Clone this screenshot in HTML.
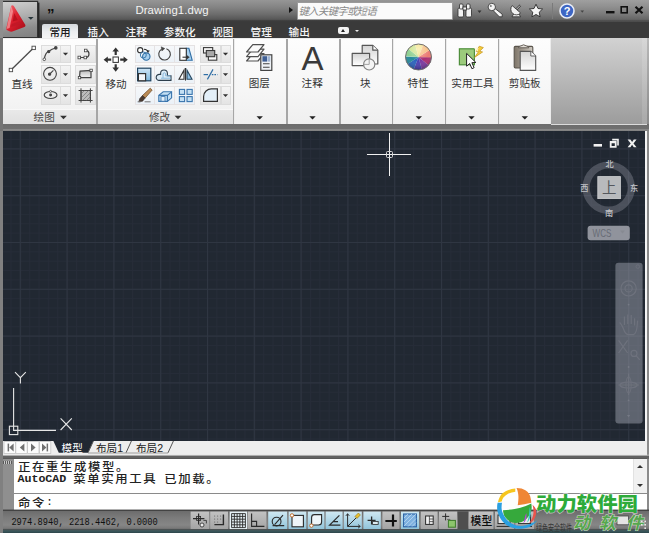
<!DOCTYPE html>
<html lang="zh-CN">
<head>
<meta charset="utf-8">
<title>Drawing1.dwg</title>
<style>
html,body{margin:0;padding:0;background:#3b3b3b;}
body{width:649px;height:533px;overflow:hidden;position:relative;font-family:"Liberation Sans","Noto Sans CJK SC",sans-serif;font-size:11px;color:#333;}
#app{position:absolute;left:0;top:0;width:649px;height:533px;overflow:hidden;background:#3b3b3b;}
.abs{position:absolute;}
/* title bar */
#title{left:0;top:0;width:649px;height:22px;background:linear-gradient(90deg,rgba(255,255,255,0) 0,rgba(255,255,255,0) 420px,rgba(255,255,255,0.09) 540px,rgba(255,255,255,0.09) 100%),linear-gradient(#969696 0,#828282 35%,#6c6c6c 65%,#575757 88%,#3d3d3d 94%,#3a3a3a 100%);}
#title .name{left:135.4px;top:1.8px;color:#f4f4f4;font-size:11.4px;letter-spacing:0.1px;line-height:16px;white-space:nowrap;}
#appbtn{left:3px;top:1.5px;width:34px;height:35px;background:linear-gradient(170deg,#d0d0d0,#b0b0b0 40%,#8c8c8c 75%,#808080);box-shadow:0 0 0 1.2px #333,1.4px 1.6px 0 1px #262626;}
#search{left:297px;top:2px;width:156px;height:17.6px;background:#fafafa;border:1px solid #9a9a9a;box-sizing:border-box;border-radius:1px;}
#search span{position:absolute;left:0.4px;top:1.2px;font-size:10.5px;line-height:14px;color:#8a8a8a;font-style:italic;white-space:nowrap;letter-spacing:-0.8px;}
/* tab bar */
#tabs{left:0;top:22px;width:649px;height:17px;background:#3a3a3a;}
.tab{position:absolute;top:3px;height:15px;line-height:15px;font-size:10.6px;font-weight:500;color:#f6f6f6;white-space:nowrap;}
#tab0{left:42px;top:24px;width:36px;height:15px;background:linear-gradient(#d4d8dc,#eceef0 50%,#f6f6f6);color:#1c1c1c;text-align:center;line-height:17px;font-size:10.6px;font-weight:500;border-radius:2px 2px 0 0;}
/* ribbon */
#ribbon{left:0;top:38px;width:649px;height:86.4px;background:#ececec;}
#ribright{left:551px;top:38px;width:98px;height:86px;background:linear-gradient(90deg,rgba(0,0,0,0) 0,rgba(0,0,0,0) 91px,rgba(255,255,255,0.12) 91px,rgba(255,255,255,0.12) 96px,rgba(0,0,0,0.12) 96px),linear-gradient(#d2d2d2,#9c9c9c);}
.panel{position:absolute;top:39px;height:85.6px;background:linear-gradient(#fdfdfd,#f6f6f6 60%,#efefef);}
.ptitle{position:absolute;left:0;right:0;bottom:0;height:16px;background:linear-gradient(#e9e9e9,#dfdfdf);border-top:1px solid #f8f8f8;box-sizing:border-box;font-size:10.6px;line-height:15px;color:#444;}
.lbl{position:absolute;font-size:10.6px;line-height:12px;color:#333;white-space:nowrap;text-align:center;}
.sb{position:absolute;width:21px;height:20px;background:linear-gradient(#f4f4f4,#e4e4e4);border:1px solid #dcdcdc;box-sizing:border-box;}
.sbb{position:absolute;width:21px;height:20px;background:linear-gradient(#f6f8fa,#ebf1f7);border:1px solid #e5e2e3;box-sizing:border-box;}
.dd{position:absolute;width:10px;height:20px;background:linear-gradient(#f4f4f4,#e4e4e4);border:1px solid #dcdcdc;border-left:none;box-sizing:border-box;}
.dd:after,.arr:after{content:"";position:absolute;left:2px;top:8px;border:3px solid transparent;border-top:3px solid #333;border-bottom:none;}
.arr{position:absolute;width:8px;height:6px;}
.arr:after{left:0;top:0;border-width:4px 4px 0 4px;border-top-color:#2a2a2a;}
/* canvas */
#belowrib{left:0;top:124px;width:649px;height:7px;background:linear-gradient(#6c6c6c 0,#707070 4.6px,#8a8a8a 5px,#808080 100%);}
#canvas{left:3px;top:131px;width:643px;height:309px;background:#222935;overflow:hidden;}
/* bottom */
#ltabs{left:0;top:440px;width:649px;height:15px;background:#f0f0f0;}
#cmd{left:0;top:455px;width:649px;height:54px;background:#fff;}
#status{left:0;top:509px;width:649px;height:24px;background:linear-gradient(#4a4a4a,#6d6d6d 20%,#5c5c5c 60%,#474747);}
.cj{display:inline-block;font-size:12.4px;letter-spacing:1.6px;position:relative;top:1.4px;transform:scaleY(0.9);transform-origin:50% 55%;font-weight:500 !important;font-family:"Noto Sans CJK SC","Noto Sans Mono CJK SC",sans-serif;}
.mono{font-family:"Liberation Mono","Noto Sans Mono CJK SC","Noto Sans CJK SC",monospace;}
</style>
</head>
<body>
<div id="app">

<!-- TITLE BAR -->
<div class="abs" style="left:0;top:0;width:2.6px;height:533px;background:linear-gradient(#8e8e8e 0,#8e8e8e 38px,#747474 38px,#747474 131px,#808080 131px);z-index:5"></div>
<div id="title" class="abs">
  <div class="abs name">Drawing1.dwg</div>
  <div class="abs" style="left:47px;top:7px;color:#0c0c0c;font-size:15px;line-height:14px;font-weight:bold;letter-spacing:-1px;">&#8221;</div>
  <div class="abs" style="left:289px;top:7px;width:0;height:0;border:3.5px solid transparent;border-left:4px solid #111;border-right:none;"></div>
  <div id="search" class="abs"><span>键入关键字或短语</span></div>
  <svg class="abs" style="left:454px;top:0" width="195" height="22" viewBox="454 0 195 22">
    <!-- binoculars -->
    <g fill="#f2f2f2" stroke="#2b2b2b" stroke-width="0.8">
      <rect x="458" y="8" width="5.5" height="9" rx="1.2"/><rect x="466" y="8" width="5.5" height="9" rx="1.2"/>
      <rect x="459.5" y="4" width="3.5" height="5" rx="1"/><rect x="466.5" y="4" width="3.5" height="5" rx="1"/>
      <rect x="463" y="7" width="3.5" height="3"/>
    </g>
    <path d="M477.5 10.5h4l-2 2.5z" fill="#333"/>
    <!-- key -->
    <g stroke="#2b2b2b" stroke-width="0.8" fill="#f2f2f2"><path d="M493.4 10.8l2-2 6.8 5.4v2.6h-2.8z"/><circle cx="491.8" cy="7" r="3.7"/><circle cx="490.8" cy="6" r="1" fill="#777" stroke="none"/></g>
    <!-- satellite -->
    <g stroke="#2b2b2b" stroke-width="0.8" fill="#f2f2f2"><path d="M514.6 12.4l-2.6 4.4h8.6l-2.4-4z"/><path d="M512.2 5.6a5.4 5.4 0 0 0 8.4 7.4z"/><path d="M516.4 9.3l4-4.1" fill="none" stroke="#2b2b2b" stroke-width="2"/><path d="M516.4 9.3l3.8-3.9" fill="none" stroke="#f2f2f2" stroke-width="0.9"/></g>
    <!-- star -->
    <path d="M536 4.2l2 4.3 4.6.5-3.4 3.2.9 4.6-4.1-2.3-4.1 2.3.9-4.6-3.4-3.2 4.6-.5z" fill="#f4f4f4" stroke="#2b2b2b" stroke-width="0.9"/>
    <rect x="552" y="3" width="1" height="16" fill="#7a7a7a"/>
    <!-- help -->
    <circle cx="567" cy="11" r="7" fill="#3d66c4" stroke="#e8ecf6" stroke-width="1.6"/>
    <text x="567" y="15" text-anchor="middle" font-family="Liberation Sans,sans-serif" font-weight="bold" font-size="11" fill="#fff">?</text>
    <path d="M580.5 10.5h3.5l-1.75 2.2z" fill="#444"/>
    <!-- window buttons -->
    <rect x="606" y="11" width="8.5" height="2.4" fill="#111"/>
    <rect x="621.2" y="6.8" width="6" height="6" fill="none" stroke="#111" stroke-width="1.6"/>
    <path d="M635.5 6.8l7 6.4M642.5 6.8l-7 6.4" stroke="#111" stroke-width="2.2"/>
  </svg>
</div>
<div id="tabs" class="abs">
  <div class="tab" style="left:87.6px">插入</div>
  <div class="tab" style="left:125.6px">注释</div>
  <div class="tab" style="left:163.8px">参数化</div>
  <div class="tab" style="left:212.2px">视图</div>
  <div class="tab" style="left:250.6px">管理</div>
  <div class="tab" style="left:288.6px">输出</div>
  <div class="abs" style="left:338px;top:5px;width:11px;height:7px;background:#f2f2f2;border-radius:2px;"></div>
  <div class="abs" style="left:341px;top:7px;width:0;height:0;border:2.5px solid transparent;border-bottom:3px solid #222;border-top:none;"></div>
  <div class="abs" style="left:355px;top:8px;width:0;height:0;border:2.2px solid transparent;border-top:2.6px solid #eee;border-bottom:none;"></div>
</div>
<div id="tab0" class="abs">常用</div>
<div id="appbtn" class="abs">
  <svg width="34" height="35" viewBox="3 1.5 34 35" style="position:absolute;left:0;top:0">
    <defs><linearGradient id="ag" x1="0" y1="0" x2="1" y2="1"><stop offset="0" stop-color="#f47a7e"/><stop offset="0.45" stop-color="#dc1f2e"/><stop offset="1" stop-color="#a50d18"/></linearGradient></defs>
    <path d="M11.2 5.2 Q12.4 4 13.8 5.4 L25.4 24.6 Q25.8 26 24.4 26.6 L12.4 31 Q10.6 31.4 9.4 30.8 L6.8 29.6 Q6 28.8 6.4 27.6 Z" fill="url(#ag)"/>
    <path d="M11.4 5.6 L6.6 28.4 L9.6 27.6 L13 11z" fill="#f59a9c" opacity="0.75"/>
    <path d="M14.2 12.6 l3.6 7 l-5 1.4z" fill="#b8121e"/>
    <path d="M11.6 23.4 l8 -2.4 l1.2 2.2 l-9.6 3.2z" fill="#c21826"/>
    <path d="M28 16.6h5.6l-2.8 2.6z" fill="#27343a"/>
  </svg>
</div>

<!-- RIBBON -->
<div id="ribbon" class="abs"></div>
<div id="ribright" class="abs"></div>
<div class="panel" style="left:3px;width:93px"><div class="ptitle"><span style="position:absolute;left:30.6px;top:0.4px">绘图</span></div></div>
<div class="panel" style="left:98px;width:135px"><div class="ptitle"><span style="position:absolute;left:51px;top:0.4px">修改</span></div></div>
<div class="panel" style="left:235px;width:51px"></div>
<div class="panel" style="left:288px;width:51px"></div>
<div class="panel" style="left:341px;width:51px"></div>
<div class="panel" style="left:394px;width:51px"></div>
<div class="panel" style="left:447px;width:51px"></div>
<div class="panel" style="left:500px;width:50px"></div>
<div class="sb" style="left:40.5px;top:44.5px;width:20px;height:18.5px"></div>
<div class="sb" style="left:60px;top:44.5px;width:10.5px;height:18.5px"></div>
<div class="sb" style="left:75px;top:44.5px;width:21px;height:18.5px"></div>
<div class="sbb" style="left:134.5px;top:44.5px;width:20.4px;height:18.5px"></div>
<div class="sbb" style="left:154.2px;top:44.5px;width:20.4px;height:18.5px"></div>
<div class="sbb" style="left:174.4px;top:44.5px;width:20.4px;height:18.5px"></div>
<div class="sb" style="left:200px;top:44.5px;width:21px;height:18.5px"></div>
<div class="sb" style="left:220.5px;top:44.5px;width:10px;height:18.5px"></div>
<div class="sb" style="left:40.5px;top:65px;width:20px;height:18.5px"></div>
<div class="sb" style="left:60px;top:65px;width:10.5px;height:18.5px"></div>
<div class="sb" style="left:75px;top:65px;width:21px;height:18.5px"></div>
<div class="sbb" style="left:134.5px;top:65px;width:20.4px;height:18.5px"></div>
<div class="sbb" style="left:154.2px;top:65px;width:20.4px;height:18.5px"></div>
<div class="sbb" style="left:174.4px;top:65px;width:20.4px;height:18.5px"></div>
<div class="sb" style="left:200px;top:65px;width:21px;height:18.5px"></div>
<div class="sb" style="left:220.5px;top:65px;width:10px;height:18.5px"></div>
<div class="sb" style="left:40.5px;top:86px;width:20px;height:18.5px"></div>
<div class="sb" style="left:60px;top:86px;width:10.5px;height:18.5px"></div>
<div class="sb" style="left:75px;top:86px;width:21px;height:18.5px"></div>
<div class="sbb" style="left:134.5px;top:86px;width:20.4px;height:18.5px"></div>
<div class="sbb" style="left:154.2px;top:86px;width:20.4px;height:18.5px"></div>
<div class="sbb" style="left:174.4px;top:86px;width:20.4px;height:18.5px"></div>
<div class="sb" style="left:200px;top:86px;width:21px;height:18.5px"></div>
<div class="sb" style="left:220.5px;top:86px;width:10px;height:18.5px"></div>
<div class="lbl" style="left:-8.0px;top:77.8px;width:60px">直线</div>
<div class="lbl" style="left:86.1px;top:77.8px;width:60px">移动</div>
<div class="lbl" style="left:229.3px;top:76.8px;width:60px">图层</div>
<div class="lbl" style="left:282.2px;top:76.8px;width:60px">注释</div>
<div class="lbl" style="left:335.4px;top:76.8px;width:60px">块</div>
<div class="lbl" style="left:388.2px;top:76.8px;width:60px">特性</div>
<div class="lbl" style="left:442.5px;top:76.8px;width:60px">实用工具</div>
<div class="lbl" style="left:494.7px;top:76.8px;width:60px">剪贴板</div>
<div class="abs" style="left:296.4px;top:39.6px;width:32px;text-align:center;font-size:33px;line-height:38px;color:#3a3a3a;font-family:'Liberation Sans',sans-serif;">A</div>
<svg class="abs" style="left:0;top:38px" width="649" height="86" viewBox="0 38 649 86">
<defs><linearGradient id="gbl" x1="0" y1="0" x2="0" y2="1"><stop offset="0" stop-color="#cfe6f6"/><stop offset="1" stop-color="#7fb9e0"/></linearGradient><linearGradient id="ggr" x1="0" y1="0" x2="0" y2="1"><stop offset="0" stop-color="#bdbdbd"/><stop offset="1" stop-color="#f4f4f4"/></linearGradient><linearGradient id="gclip" x1="0" y1="0" x2="1" y2="0"><stop offset="0" stop-color="#7d7468"/><stop offset="1" stop-color="#cfcac2"/></linearGradient><linearGradient id="gpaper" x1="0" y1="0" x2="0" y2="1"><stop offset="0" stop-color="#d4d4d4"/><stop offset="1" stop-color="#ffffff"/></linearGradient></defs>
<path d="M62.9 52.65h5.2l-2.6 2.8z" fill="#333"/>
<path d="M222.9 52.65h5.2l-2.6 2.8z" fill="#333"/>
<path d="M62.9 73.14999999999999h5.2l-2.6 2.8z" fill="#333"/>
<path d="M222.9 73.14999999999999h5.2l-2.6 2.8z" fill="#333"/>
<path d="M62.9 94.14999999999999h5.2l-2.6 2.8z" fill="#333"/>
<path d="M222.9 94.14999999999999h5.2l-2.6 2.8z" fill="#333"/>
<path d="M60.1 115.8h6.8l-3.4 3.4z" fill="#333"/>
<path d="M174.6 115.8h6.8l-3.4 3.4z" fill="#333"/>
<path d="M256.5 116.2h6.4l-3.2 3.2z" fill="#222"/>
<path d="M309.3 116.2h6.4l-3.2 3.2z" fill="#222"/>
<path d="M362.2 116.2h6.4l-3.2 3.2z" fill="#222"/>
<path d="M415.6 116.2h6.4l-3.2 3.2z" fill="#222"/>
<path d="M468.3 116.2h6.4l-3.2 3.2z" fill="#222"/>
<path d="M521.5999999999999 116.2h6.4l-3.2 3.2z" fill="#222"/>
<g stroke="#4a4a4a" stroke-width="1.3" fill="#fff"><path d="M11 70L33.5 48" /><rect x="9.2" y="68.3" width="3.4" height="3.4" stroke-width="0.9"/><rect x="32" y="46.2" width="3.4" height="3.4" stroke-width="0.9"/></g>
<g stroke="#444" stroke-width="1.2" fill="none"><path d="M44.4 58.5 Q45.5 52.5 48.8 51.3 Q52 49 55.6 48"/><circle cx="44.3" cy="59.3" r="1.3" fill="#fff" stroke-width="0.9"/><circle cx="48.7" cy="51.6" r="1.1" fill="#444"/><circle cx="55.8" cy="47.9" r="1.2" fill="#444"/></g>
<g stroke="#444" stroke-width="1.1" fill="none"><circle cx="50" cy="73.8" r="6.4"/><path d="M49.8 74l3.6-3.6"/><circle cx="49.6" cy="74.2" r="1.1" fill="#444"/></g>
<g stroke="#444" stroke-width="1.1" fill="none"><ellipse cx="50.6" cy="95" rx="6.4" ry="3.5"/><circle cx="50.6" cy="95" r="0.9" fill="#444"/><circle cx="50.6" cy="91.4" r="1" fill="#fff" stroke-width="0.8"/></g>
<g stroke="#444" stroke-width="1.2" fill="none"><path d="M79.5 57.5H86 A3.6 3.6 0 0 0 86 50.4"/><rect x="78" y="56.2" width="2.6" height="2.6" fill="#fff" stroke-width="0.8"/><rect x="84" y="56.2" width="2.6" height="2.6" fill="#fff" stroke-width="0.8"/><rect x="84.4" y="49.2" width="2.6" height="2.6" fill="#fff" stroke-width="0.8"/></g>
<g stroke="#444" stroke-width="1.2"><path d="M80 71.2L91 70.4V77.7H79.5z" fill="url(#ggr)"/><rect x="78.3" y="76.4" width="2.4" height="2.4" fill="#fff" stroke-width="0.8"/><rect x="89.9" y="69.2" width="2.4" height="2.4" fill="#fff" stroke-width="0.8"/></g>
<g stroke="#444" stroke-width="1" fill="none"><rect x="81" y="90.5" width="9.4" height="10" fill="#bcbcbc"/><path d="M78.6 90.5H92.6M78.6 100.5H92.6M81 88.3V102.6M90.4 88.3V102.6"/><path d="M81 94l3.5-3.5M81 98l7.5-7.5M82.5 100.5l8-8M86.5 100.5l4-4" stroke-width="0.6" stroke="#666"/></g>
<g fill="#333" stroke="none"><rect x="113" y="57" width="5.4" height="5.4" fill="#fff" stroke="#333" stroke-width="1"/><path d="M115.7 47.4l3.3 4.2h-2.2v3.4h-2.2v-3.4h-2.2z"/><path d="M115.7 71.8l3.3-4.2h-2.2v-3.4h-2.2v3.4h-2.2z"/><path d="M103.6 59.7l4.2-3.3v2.2h3.4v2.2h-3.4v2.2z"/><path d="M127.8 59.7l-4.2-3.3v2.2h-3.4v2.2h3.4v2.2z"/></g>
<g fill="none" stroke="#333" stroke-width="1.1"><circle cx="140.2" cy="50.2" r="2.6" fill="#fff"/><circle cx="146.3" cy="56.6" r="3.7" fill="#a8d0ee" stroke="#2f6ea5"/><circle cx="143.3" cy="55" r="3" fill="none" stroke="#2f6ea5" stroke-width="0.9"/><path d="M144 49.3q3.4.2 3.8 2.6" /><path d="M147 50.5l1 2.2 1.3-2z" fill="#333" stroke-width="0.5"/></g>
<g fill="none" stroke="#444" stroke-width="1.15"><path d="M166.4 48.7A5.8 5.8 0 1 1 161.6 49.2"/><path d="M161.2 46.8l3.6 1.7-2.9 2.5z" fill="#444" stroke-width="0.5"/></g>
<g stroke="#333" stroke-width="1.1"><path d="M186.3 48.3l2.6 0 3.3 12h-5.9z" fill="#a8d0ee" stroke="#2f6ea5"/><rect x="179.8" y="48.3" width="6.5" height="12" fill="#fff"/><path d="M182.5 57.2h5" /><path d="M187 55.5l2.4 1.7-2.4 1.7z" fill="#333" stroke-width="0.4"/></g>
<g stroke="#3a3a3a" stroke-width="1.1"><rect x="203.5" y="47.6" width="9.2" height="5.4" fill="#f8f8f8"/><rect x="208.4" y="54.6" width="8.4" height="5.6" fill="#f8f8f8"/><rect x="206.3" y="50.5" width="8.4" height="6.2" fill="#a9a9a9"/></g>
<g stroke="#20435f" stroke-width="1.2"><rect x="137.6" y="68.2" width="13.2" height="12.6" fill="url(#gbl)"/><rect x="138.4" y="73.6" width="7.2" height="7.2" fill="#f2f6fa" stroke="#333"/></g>
<g fill="none" stroke="#2d3e4c" stroke-width="1.1"><path d="M158.8 80.4h12.2v-4.6h-3.6v-2.4a3.4 3.4 0 0 0 -6.8 0v1h-1a2.4 2.4 0 0 0 -0.8 6z" fill="#dcecf7"/><path d="M161 78.2h10M163 78v-4.4a1.6 1.6 0 0 1 2.6 0v2.2h5" stroke="#7fb2d8" stroke-width="0.9"/></g>
<g stroke="#333" stroke-width="1.1"><path d="M185.5 68v12.6" /><path d="M184 70.2v9h-5z" fill="#fff"/><path d="M187 70.2v9h5z" fill="#8ec1e6" stroke="#27475f"/></g>
<g stroke="#2f6ea5" stroke-width="1.2" fill="none"><path d="M207.4 79.4l5.6-10"/><path d="M203.6 74.6h4.4" /><path d="M211.8 74.6h5.6" stroke-dasharray="1.6 1"/></g>
<g><path d="M150.2 88.2l2 1.8-7 8-2.8-2.4z" fill="#b98a55" stroke="#6b4a26" stroke-width="0.7"/><path d="M142.4 95.6l2.8 2.4-2.6 3.2-3.8.6 1-3.4z" fill="#4a3a30" stroke="#2a2220" stroke-width="0.5"/><path d="M137.6 101.8h3M144.6 101.8h6" stroke="#777" stroke-width="1"/></g>
<g stroke="#3a75ad" stroke-width="1.1" fill="#c4e0f4"><path d="M158.8 95.4l4.4-3.6h8.4v6l-4.2 3.6h-8.6z"/><path d="M158.8 95.4h8.6v6M167.4 95.4l4.2-3.6" fill="none"/><rect x="161" y="96.6" width="4" height="4.6" fill="#e5f1fa" stroke-width="0.8"/></g>
<g stroke="#3a75ad" stroke-width="1.1" fill="#c4e0f4"><rect x="179.4" y="89.4" width="5.2" height="5"/><rect x="187" y="89.4" width="5.2" height="5"/><rect x="179.4" y="96.6" width="5.2" height="5"/><rect x="187" y="96.6" width="5.2" height="5"/></g>
<g stroke="#333" stroke-width="1.2"><path d="M203.6 101.3V96.4A7.8 7.8 0 0 1 211.6 88.8H217.4V101.3z" fill="#e3eff8"/></g>
<g stroke="#505050" stroke-width="1.2" fill="#fafafa" stroke-linejoin="round"><path d="M252.8 53.6H264L258 61H246.6z"/><path d="M252.8 49.2H264L258 56.6H246.6z"/><path d="M252.8 44.6H264L258 52H246.6z"/></g>
<g><rect x="260.8" y="54.8" width="11" height="15.6" fill="#eef2f6" stroke="#444" stroke-width="1.2"/><rect x="262.4" y="56.2" width="4.6" height="5.4" fill="#3f5f94"/><rect x="267.4" y="56.2" width="2.8" height="5.4" fill="#9fb4d2"/><path d="M263 63.8h6.6M263 67.2h6.6" stroke="#444" stroke-width="1.1"/></g>
<g stroke="#555" stroke-width="1.2" stroke-linejoin="round"><path d="M362.2 45.4h10.6l5 4.8V64H362.2z" fill="url(#gpaper)"/><path d="M372.8 45.4v4.8h5" fill="#fff"/><rect x="352.2" y="53.4" width="17.4" height="12.2" fill="url(#gpaper)"/><circle cx="369.2" cy="64.4" r="5.6" fill="#f4f4f4" stroke="#858585"/><path d="M369.2 59v5.4h-5.4" fill="none" stroke="#9a9a9a" stroke-width="0.9"/></g>
<path d="M418.5 57L429.40 49.92A13 13 0 0 1 431.48 57.68z" fill="#e23b2e"/>
<path d="M418.5 57L431.48 57.68A13 13 0 0 1 428.60 65.18z" fill="#c03378"/>
<path d="M418.5 57L428.60 65.18A13 13 0 0 1 421.86 69.56z" fill="#8a3fae"/>
<path d="M418.5 57L421.86 69.56A13 13 0 0 1 413.84 69.14z" fill="#5546c2"/>
<path d="M418.5 57L413.84 69.14A13 13 0 0 1 407.60 64.08z" fill="#2f6fd0"/>
<path d="M418.5 57L407.60 64.08A13 13 0 0 1 405.52 56.32z" fill="#2a9aa8"/>
<path d="M418.5 57L405.52 56.32A13 13 0 0 1 408.40 48.82z" fill="#57b85a"/>
<path d="M418.5 57L408.40 48.82A13 13 0 0 1 415.14 44.44z" fill="#b5d552"/>
<path d="M418.5 57L415.14 44.44A13 13 0 0 1 423.16 44.86z" fill="#f0d548"/>
<path d="M418.5 57L423.16 44.86A13 13 0 0 1 429.40 49.92z" fill="#f29a3c"/>
<path d="M405.5 57A13 13 0 0 1 431.5 57z" fill="#fff" opacity="0.33"/>
<path d="M405.5 57A13 13 0 0 0 431.5 57z" fill="#101040" opacity="0.12"/>
<defs><radialGradient id="gw" cx="0.5" cy="0.2" r="0.8"><stop offset="0" stop-color="#fff" stop-opacity="0.45"/><stop offset="0.55" stop-color="#fff" stop-opacity="0"/><stop offset="1" stop-color="#000" stop-opacity="0.28"/></radialGradient></defs>
<circle cx="418.5" cy="57" r="13" fill="url(#gw)" stroke="#707070" stroke-width="1"/>
<g><rect x="459.4" y="48.8" width="15" height="16" fill="#9ccb7c" stroke="#4f8f3c" stroke-width="1.2"/><path d="M479.3 46.2L476 51.2L478.5 51.6L474.6 57.4L482.6 52L479.7 51.2L483.4 47.6z" fill="#f4cc3c" stroke="#c4941c" stroke-width="0.7"/><path d="M476.4 46.6l1 1.6 1.8.2-1.4 1.2.4 1.8-1.8-1-1.6 1 .4-1.8-1.4-1.2 1.8-.2z" fill="#fff8d8" opacity="0.9"/><path d="M466.6 53.4V66.2L469.7 63.5L471.9 68.7L474.1 67.7L471.9 62.7L475.9 62.5Z" fill="#fff" stroke="#222" stroke-width="1"/></g>
<g stroke-linejoin="round"><rect x="514.2" y="46.4" width="18.6" height="21.6" rx="1.2" fill="url(#gclip)" stroke="#5a544c" stroke-width="1.1"/><path d="M518.4 47.8q0.4-1.6 2.2-1.8q3-2.4 6 0q1.8 0.2 2.2 1.8z" fill="#e4e0da" stroke="#5a544c" stroke-width="0.9"/><path d="M520.2 51.4h10.6l4.9 4.6V70.4h-15.5z" fill="url(#gpaper)" stroke="#555" stroke-width="1.1"/><path d="M530.8 51.4v4.6h4.9" fill="#fff" stroke="#555" stroke-width="0.9"/></g>
</svg>
<div class="abs" style="left:96.2px;top:39px;width:1.5px;height:85.4px;background:#a6a6a6;"></div><div class="abs" style="left:232.8px;top:39px;width:1.5px;height:85.4px;background:#a6a6a6;"></div><div class="abs" style="left:286.0px;top:39px;width:1.5px;height:85.4px;background:#a6a6a6;"></div><div class="abs" style="left:339.1px;top:39px;width:1.5px;height:85.4px;background:#a6a6a6;"></div><div class="abs" style="left:391.7px;top:39px;width:1.5px;height:85.4px;background:#a6a6a6;"></div><div class="abs" style="left:444.7px;top:39px;width:1.5px;height:85.4px;background:#a6a6a6;"></div><div class="abs" style="left:497.7px;top:39px;width:1.5px;height:85.4px;background:#a6a6a6;"></div><div id="belowrib" class="abs"></div><div class="abs" style="left:551px;top:123.8px;width:96px;height:1.7px;background:#dcdcdc;"></div>

<!-- CANVAS -->
<svg class="abs" style="left:0;top:124px" width="649" height="320" viewBox="0 124 649 320">
<defs><pattern id="gmin" x="19.8" y="148.4" width="9.36" height="9.36" patternUnits="userSpaceOnUse"><path d="M0.5 0V9.36M0 0.5H9.36" stroke="#262c38" stroke-width="1" fill="none"/></pattern><pattern id="gmaj" x="19.8" y="148.4" width="46.8" height="46.8" patternUnits="userSpaceOnUse"><path d="M0.5 0V46.8M0 0.5H46.8" stroke="#2f3642" stroke-width="1" fill="none"/></pattern></defs>
<rect x="3" y="131" width="642" height="310" fill="#212832"/>
<rect x="3" y="131" width="642" height="310" fill="url(#gmin)"/>
<rect x="3" y="131" width="642" height="310" fill="url(#gmaj)"/>
<g stroke="#f0f0f0" stroke-width="1" fill="none"><path d="M389.5 133V176M367 154.5H411"/><rect x="386.5" y="151.5" width="6" height="6" rx="1" stroke="#d8d8d8"/></g>
<g stroke="#e6e6e6" stroke-width="1.1" fill="none"><path d="M13.6 388V430.4H56"/><rect x="9.4" y="426.2" width="8.4" height="8.4"/><path d="M15 372.2l5.4 5.4 5.4-5.4M20.4 377.6V383.4"/><path d="M60.6 418.4l11.2 11.6M71.8 418.4L60.6 430"/></g>
<g fill="#f2f2f2"><rect x="593.6" y="144" width="8.4" height="2.6"/><path d="M612.2 138.8h6.6v6.6h-1.6v-5h-5z"/><path d="M609.8 141h6.8v6.8h-6.8zM611.6 143.2v2.8h3.2v-2.8z" fill-rule="evenodd"/><path d="M627.6 139.6h2.8l1.7 2.4 1.7-2.4h2.8l-3.1 3.8 3.1 3.8h-2.8l-1.7-2.4-1.7 2.4h-2.8l3.1-3.8z"/></g>
<circle cx="608.7" cy="187.6" r="22.6" fill="none" stroke="#a0a4b0" stroke-opacity="0.33" stroke-width="7.2"/>
<rect x="597.8" y="176.6" width="22.6" height="22" fill="#b8babd" stroke="#cfd1d3" stroke-width="0.8"/>
<g font-family="Liberation Sans,Noto Sans CJK SC,sans-serif" text-anchor="middle">
<text x="609.2" y="192.6" font-size="14.4" fill="#54575d">上</text>
<g font-size="8.2" fill="#c2c4c8" font-weight="500"><text x="609.5" y="167.2">北</text>
<text x="609.2" y="215.8">南</text>
<text x="584.3" y="190.6">西</text>
<text x="634" y="191.2">东</text></g>
</g>
<rect x="587.6" y="225.8" width="42.2" height="14.4" rx="3" fill="#90939c"/>
<text x="592.6" y="236.8" font-family="Liberation Sans,sans-serif" font-size="10.4" fill="#676b75" textLength="18.8" lengthAdjust="spacingAndGlyphs">WCS</text>
<path d="M620 230.5h5l-2.5 3z" fill="#858890" opacity="0.8"/>
<rect x="615.4" y="262.8" width="27.2" height="160.8" rx="3" fill="#a0a4b0" fill-opacity="0.49"/>
<g stroke="#6e727d" stroke-width="1.2" fill="none">
<circle cx="628.6" cy="288.4" r="7.6"/><circle cx="628.6" cy="288.4" r="3.6"/><circle cx="637.8" cy="266.6" r="1.8" stroke-width="0.8"/>
<path d="M619.6 322.6c1.6 1 2.6 3.4 4 6.6c1 3 2.6 5 4.6 5.4h5.4c2-1.2 3-4 3.4-7.4l0.6-6.6M624.4 325v-8.4M627.8 324v-9.6M631.2 324v-9M634.6 325.6v-7.4"/>
<path d="M618.6 340.4l9 12.6M627.6 340.4l-9 12.6"/><circle cx="634" cy="353.4" r="3"/><path d="M636.2 355.8l3.6 4"/>
<path d="M628.6 373.6v21.4M618.4 385h20.6"/><ellipse cx="628.6" cy="385" rx="8.6" ry="3"/><ellipse cx="628.6" cy="385" rx="2.6" ry="8.4" stroke-width="0.9"/>
</g>
<g fill="#767a85"><circle cx="628.6" cy="304.6" r="0.9"/><circle cx="628.6" cy="367" r="0.9"/><circle cx="628.6" cy="400.4" r="0.9"/><path d="M627 415h3.2l-1.6 2.2z"/></g>
<rect x="0" y="131" width="3" height="313" fill="#808080"/>
<rect x="645" y="131" width="2" height="313" fill="#f4f4f4"/><rect x="647" y="131" width="2" height="313" fill="#8b8b8b"/>
</svg>

<!-- BOTTOM -->
<div id="ltabs" class="abs" style="left:2.6px;top:441px;width:644.4px;height:15px;background:#eeeeee;"></div><div class="abs" style="left:647px;top:440px;width:2px;height:20px;background:#8b8b8b;"></div>
<svg class="abs" style="left:0;top:440px" width="649" height="20" viewBox="0 440 649 20">
  <rect x="0" y="454.8" width="649" height="1" fill="#dcdcdc"/>
  <rect x="0" y="455.6" width="649" height="3.2" fill="#626262"/>
  <g fill="#fcfcfc" stroke="#c4c4c4" stroke-width="0.8"><rect x="4" y="441.6" width="11.4" height="11.8"/><rect x="15.8" y="441.6" width="11.4" height="11.8"/><rect x="27.6" y="441.6" width="11.4" height="11.8"/><rect x="39.4" y="441.6" width="11.4" height="11.8"/></g>
  <g fill="#707070"><path d="M13.6 443.6v7.8l-4.4-3.9z"/><rect x="7.6" y="443.6" width="1.5" height="7.8"/><path d="M24.4 443.6v7.8l-4.6-3.9z"/><path d="M31 443.6v7.8l4.6-3.9z"/><path d="M42 443.6v7.8l4.4-3.9z"/><rect x="46.6" y="443.6" width="1.5" height="7.8"/></g>
  <path d="M53.4 441H93.4L88 452.8H58.8z" fill="#212832"/>
  <path d="M93.4 441L88 452.8M131.4 441L126 452.8M173.4 441L168 452.8" stroke="#555" stroke-width="1" fill="none"/>
  <path d="M88 453H168" stroke="#888" stroke-width="0.8"/>
  <g font-family="Liberation Sans,Noto Sans CJK SC,sans-serif" font-size="10.6">
    <text x="61.6" y="451.6" fill="#fff">模型</text>
    <text x="96" y="451.6" fill="#222">布局1</text>
    <text x="136" y="451.6" fill="#222">布局2</text>
  </g>
</svg>
<div id="cmd" class="abs" style="top:458.7px;height:51.3px;">
  <div class="abs" style="left:0;top:0;width:14.4px;height:51px;background:#8f8f8f;"></div>
  <div class="abs" style="left:3px;top:2.4px;width:9px;height:2.6px;background:repeating-linear-gradient(90deg,#5a5a5a 0,#5a5a5a 1px,#c8c8c8 1px,#c8c8c8 2px);"></div>
  <div class="abs mono" style="left:18px;top:-0.4px;font-size:11.67px;line-height:13px;color:#222;white-space:pre;"><span class="cj">正在重生成模型。</span></div>
  <div class="abs mono" style="left:17.4px;top:12.4px;font-weight:bold;font-size:11.67px;line-height:13px;color:#222;white-space:pre;">AutoCAD <span class="cj">菜单实用工具</span> <span class="cj">已加载。</span></div>
  <div class="abs" style="left:14.4px;top:34.8px;width:633px;height:1px;background:#8a8a8a;"></div>
  <div class="abs mono" style="left:18px;top:35.6px;font-size:11.67px;line-height:13px;color:#222;white-space:pre;"><span class="cj">命令</span>:</div>
  <div class="abs" style="left:633px;top:0;width:14px;height:34.8px;background:#f1f1f1;border-left:1px solid #e2e2e2;box-sizing:border-box;"></div>
  <div class="abs" style="left:636.6px;top:6.6px;width:0;height:0;border:3.4px solid transparent;border-bottom:3.2px solid #333;border-top:none;"></div>
  <div class="abs" style="left:636.6px;top:25.6px;width:0;height:0;border:3.4px solid transparent;border-top:3.2px solid #333;border-bottom:none;"></div>
  <div class="abs" style="left:647px;top:0;width:2px;height:51px;background:#8b8b8b;"></div>
</div>
<svg class="abs" style="left:0;top:480px" width="649" height="53" viewBox="0 480 649 53">
<defs>
<linearGradient id="stbg" x1="0" y1="0" x2="0" y2="1"><stop offset="0.000" stop-color="#3a3a3a"/><stop offset="0.043" stop-color="#444444"/><stop offset="0.060" stop-color="#6c6c6c"/><stop offset="0.359" stop-color="#7c7c7c"/><stop offset="0.658" stop-color="#868686"/><stop offset="0.803" stop-color="#787878"/><stop offset="0.846" stop-color="#4c5152"/><stop offset="0.915" stop-color="#3b595d"/><stop offset="1.000" stop-color="#2d454a"/></linearGradient>
<linearGradient id="bgray" x1="0" y1="0" x2="0" y2="1"><stop offset="0" stop-color="#c2c2c2"/><stop offset="1" stop-color="#a4a4a4"/></linearGradient>
<linearGradient id="bblue" x1="0" y1="0" x2="0" y2="1"><stop offset="0" stop-color="#cfe8f2"/><stop offset="1" stop-color="#92c4da"/></linearGradient>
</defs>
<rect x="0" y="509.6" width="649" height="23.4" fill="url(#stbg)"/>
<text x="11.4" y="525.3" font-family="Liberation Mono,monospace" font-size="10.6" fill="#101010" textLength="146.4" lengthAdjust="spacingAndGlyphs">2974.8940, 2218.4462, 0.0000</text>
<rect x="190.6" y="511.6" width="18.7" height="17.4" fill="url(#bgray)"/>
<rect x="210.2" y="511.6" width="17.8" height="17.4" fill="url(#bgray)"/>
<rect x="229.7" y="511.6" width="17.5" height="17.4" fill="#e6f1f6"/>
<rect x="248" y="511.6" width="18.4" height="17.4" fill="url(#bgray)"/>
<rect x="268.2" y="511.6" width="19.0" height="17.4" fill="url(#bblue)"/>
<rect x="288.6" y="511.6" width="17.7" height="17.4" fill="url(#bblue)"/>
<rect x="307.8" y="511.6" width="16.6" height="17.4" fill="url(#bblue)"/>
<rect x="325.6" y="511.6" width="17.0" height="17.4" fill="url(#bblue)"/>
<rect x="343.8" y="511.6" width="18.0" height="17.4" fill="url(#bblue)"/>
<rect x="363.4" y="511.6" width="17.4" height="17.4" fill="url(#bblue)"/>
<rect x="382.4" y="511.6" width="17.0" height="17.4" fill="url(#bgray)"/>
<rect x="401" y="511.6" width="18.0" height="17.4" fill="url(#bblue)"/>
<rect x="420.8" y="511.6" width="16.8" height="17.4" fill="url(#bgray)"/>
<rect x="439" y="511.6" width="18.0" height="17.4" fill="url(#bgray)"/>
<rect x="468.8" y="511.6" width="24.6" height="17.4" fill="url(#bgray)"/>
<rect x="495" y="511.6" width="19.0" height="17.4" fill="url(#bgray)"/>
<rect x="515.5" y="511.6" width="18.5" height="17.4" fill="url(#bgray)"/>
<rect x="458" y="511.6" width="10" height="17.4" fill="#4e4e4e"/>
<g stroke="#2a2a2a" stroke-width="1.2" fill="none"><path d="M198.6 513.4v11M193 518.6h11.4"/><rect x="196.6" y="516.6" width="4" height="4" stroke-width="0.8"/><circle cx="202" cy="525" r="2" fill="#eee" stroke-width="0.8"/><path d="M203.4 520.4h3v3" stroke-width="0.8"/></g>
<g fill="#666"><circle cx="214.6" cy="516" r="0.6"/><circle cx="217.6" cy="516" r="0.6"/><circle cx="220.6" cy="516" r="0.6"/><circle cx="214.6" cy="519" r="0.6"/><circle cx="217.6" cy="519" r="0.6"/><circle cx="220.6" cy="519" r="0.6"/><circle cx="214.6" cy="522" r="0.6"/><circle cx="217.6" cy="522" r="0.6"/></g><path d="M223.4 514.6V524.6H214.4" stroke="#2a2a2a" stroke-width="1.4" fill="none"/>
<path d="M231.60 513.6v14M234.36 513.6v14M237.12 513.6v14M239.88 513.6v14M242.64 513.6v14M245.40 513.6v14M231.6 513.60h13.8M231.6 516.40h13.8M231.6 519.20h13.8M231.6 522.00h13.8M231.6 524.80h13.8M231.6 527.60h13.8" stroke="#2a2a2a" stroke-width="0.9" fill="none"/>
<path d="M251.6 513.4V526.4H264.4M251.6 521.4H256.6V526.4" stroke="#2a2a2a" stroke-width="1.1" fill="none"/>
<g stroke="#2a2a2a" stroke-width="1.1" fill="none"><circle cx="276.6" cy="521.6" r="4.4"/><path d="M272.6 525.6h11.6M274.6 524.6l8.4-9.4"/></g>
<g stroke="#2a2a2a" stroke-width="1.1" fill="none"><rect x="292" y="515.4" width="11.4" height="11.4" fill="#eef5f9"/><circle cx="292" cy="515.4" r="1.7" fill="#fff" stroke="#c0641e" stroke-width="0.9"/></g>
<g stroke="#2a2a2a" stroke-width="1.1" fill="none"><path d="M311.6 525V517.4Q311.6 514.6 314.4 514.6H321.6V522Q321.6 525 318.6 525z" fill="#eef5f9"/><circle cx="311.4" cy="525.6" r="1.7" fill="#fff" stroke="#c0641e" stroke-width="0.9"/></g>
<path d="M339.4 515.4L329.6 525.2H340.4M333 521.6l5 0" stroke="#2a2a2a" stroke-width="1.2" fill="none"/>
<g fill="none"><path d="M347.6 514V526.4H360M347.6 526.4l9.4-9.4" stroke="#2a2a2a" stroke-width="1"/><path d="M345.8 516l1.8-2.4 1.8 2.4M358 524.6l2.4 1.8-2.4 1.8" stroke="#2a2a2a" stroke-width="0.8"/><path d="M355 516.4l3.4-3.4 2 2-3.4 3.4z" fill="#e8c030" stroke="#8a6d10" stroke-width="0.6"/></g>
<g stroke="#2a2a2a" fill="none"><path d="M367.6 520.4h8M371.6 516.4v8" stroke-width="1.3"/><rect x="372.6" y="521.4" width="5.6" height="3" stroke-width="0.8" fill="#dceaf0"/></g>
<path d="M385.4 521h11.4M393 514.6v12" stroke="#111" stroke-width="2.2" fill="none"/>
<rect x="403.6" y="514" width="12.8" height="12.8" fill="#7fb2e0" stroke="#2b63a6" stroke-width="1.1"/><path d="M404 518l4-4M404 522l8-8M404 526l12-12M408 526.6l8-8M412 526.6l4-4" stroke="#c7def3" stroke-width="0.7"/>
<g stroke="#2a2a2a" stroke-width="1" fill="#efefef"><rect x="425.6" y="516" width="7.6" height="8.4"/><path d="M429.4 516v8.4M429.4 519h3.8M429.4 521.6h3.8" fill="none" stroke-width="0.7"/></g>
<g fill="none"><path d="M442.2 516.4h7M445.6 513.4v7" stroke="#2a2a2a" stroke-width="1"/><path d="M447 519.4h3v2" stroke="#555" stroke-width="0.8"/><rect x="448.4" y="520.4" width="7" height="6.8" fill="#8cc56c" stroke="#3f7a2c" stroke-width="1"/></g>
<text x="470.6" y="525.4" font-family="Liberation Sans,Noto Sans CJK SC,sans-serif" font-size="10.8" font-weight="500" fill="#0c0c0c">模型</text>
<g stroke="#2a2a2a" stroke-width="1" fill="#e8e8e8"><rect x="498" y="515" width="12" height="8.6"/><path d="M496.6 526.4h15" fill="none"/><rect x="518.6" y="515" width="12" height="8.6"/><path d="M517 526.4h15" fill="none"/></g>
<text x="536" y="531.4" font-family="Liberation Sans,Noto Sans CJK SC,sans-serif" font-size="8.6" fill="#333" textLength="36" lengthAdjust="spacingAndGlyphs">绿色安全软件</text>
<rect x="617" y="516" width="11.6" height="8.8" fill="#e4e4e4" stroke="#444" stroke-width="0.8"/>
<g font-family="Liberation Sans,Noto Sans CJK SC,sans-serif" font-weight="bold" font-style="italic" font-size="17" fill="#4fae45" stroke="#e4f2e0" stroke-width="0.9" paint-order="stroke" opacity="0.85">
<text x="573" y="528.6">动</text><text x="599" y="528.6">软</text><text x="626" y="528.6">件</text></g>
<g fill="#e8e8e8"><rect x="641" y="520.6" width="1.6" height="1.6"/><rect x="644.4" y="520.6" width="1.6" height="1.6"/><rect x="641" y="524" width="1.6" height="1.6"/><rect x="644.4" y="524" width="1.6" height="1.6"/><rect x="644.4" y="527.4" width="1.6" height="1.6"/></g>
<g>
<circle cx="515.6" cy="506.4" r="15.4" fill="#fdfdfd"/>
<path d="M498 502.2C498.6 499.4 499.6 497 501.1 494.8C503 492.6 505 491.4 507.3 490.5C510 489.2 512.6 488.6 515.3 488.4L515.3 491.7C513 492 510.6 492.6 508.5 493.6C506.6 494.6 505 495.8 503.6 497.3C502.6 498.6 502 500 501.7 501.6z" fill="#f6c61e"/>
<path d="M516.5 488C520 488 523.4 488.8 525.8 490.5C528.6 492.4 530.2 495.2 530.7 498.5C531 500 531.3 501.4 531.3 502.8C526.6 504 522 504.8 517.7 505.3C518.2 502 518.6 499 518.4 496C518.2 493 517.6 490.4 516.5 488z" fill="#ef8635"/>
<path d="M503 510.2C507 510 511 509.6 514.7 509C518.6 508.2 522.4 507.2 525.8 505.9C527.8 505.2 529.6 504.4 531.3 503.4C531.8 506 531.8 508.4 531.3 510.8C530.6 513.6 529 516.2 527 518.2C525 520.4 522.4 521.8 519.6 522.5C517.2 523 514.6 523 512.2 522.5C509.4 521.6 507.2 519.8 505.4 517.6C503.8 515.4 503.2 513 503 510.2z" fill="#36a93c"/>
<path d="M497.6 502.8C497 505.4 497 508.2 497.4 510.8C498 514 499.4 517 501.1 519.5C503 522.4 505.6 524.6 508.5 526.2C511.6 527.8 515 528.6 518.4 528.7C522.4 528.8 526.2 528.2 529.5 526.9C532.8 525.4 535.6 523 537.5 520.1C535.4 521.8 533.2 523 530.7 523.8C527.6 525 524.2 525.8 520.8 525.9C517.4 525.8 514 524.8 511 523.2C508.4 521.6 506.4 519.4 504.8 517C503.2 514.6 502.2 512.2 501.7 509.6C501.4 507.4 501.6 505 502 502.8z" fill="#2b9fe0"/>
<path d="M532.5 504.7C534.6 506.4 536 508.4 536.2 510.8C536.4 514.6 535.4 518 533.2 520.7C531.8 522 530.4 522.8 529 523.2C531.6 520.4 533 517 533.4 513.6C533.6 510.4 533.4 507.4 532.5 504.7z" fill="#e8554c"/>
<path d="M529.6 507C530.8 510 531 513.2 530.4 516.4C529.8 519 528.6 521 527 522.6C528.2 519.8 528.8 517 529 514C529.2 511.6 529.6 509.2 529.6 507z" fill="#36c9c2"/>
<path d="M526.2 513C526.8 515.4 526.6 517.8 525.8 520C525.2 521.4 524.4 522.4 523.4 523.2C524.2 521 524.8 518.8 525 516.6z" fill="#b44bd4"/>
</g>
<text x="536" y="511" font-family="Liberation Sans,Noto Sans CJK SC,sans-serif" font-size="19" font-weight="900" fill="#2eab3a" stroke="#ffffff" stroke-opacity="0.55" stroke-width="1.6" paint-order="stroke" textLength="102" lengthAdjust="spacingAndGlyphs">动力软件园</text>
</svg>

</div>
</body>
</html>
